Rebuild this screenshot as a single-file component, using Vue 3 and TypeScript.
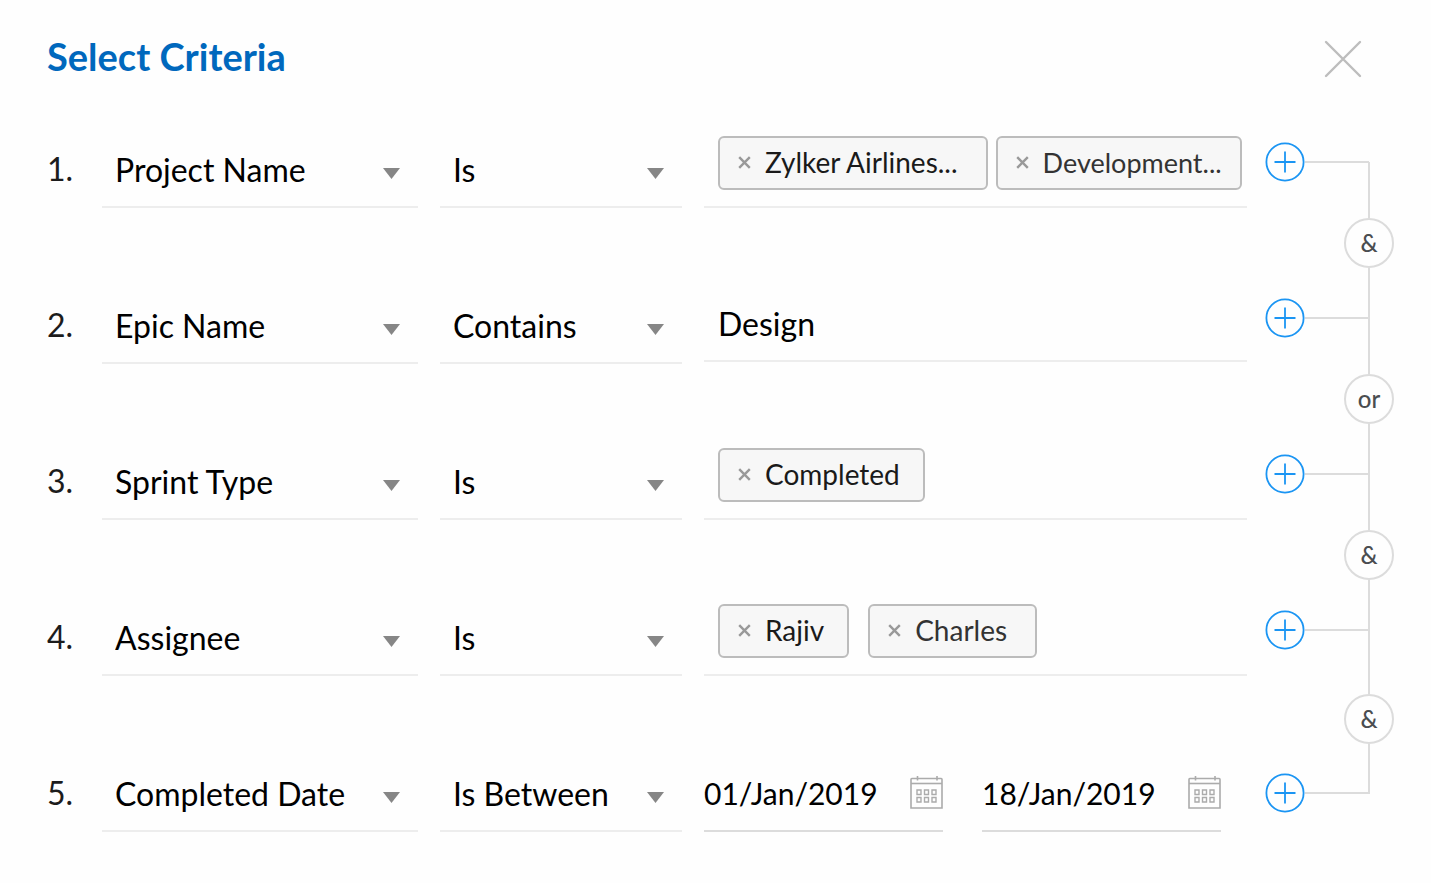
<script setup lang="ts">
import { ref } from 'vue'

interface Tag {
  label: string
  look?: 'roomy' | 'snug'
  muted?: boolean
}

interface Criterion {
  id: number
  field: string
  operator: string
  kind: 'tags' | 'text' | 'dates'
  tags?: Tag[]
  text?: string
  dates?: string[]
}

const fields = ['Project Name', 'Epic Name', 'Sprint Type', 'Assignee', 'Completed Date']
const operators = ['Is', 'Contains', 'Is Between']

const criteria = ref<Criterion[]>([
  {
    id: 1,
    field: 'Project Name',
    operator: 'Is',
    kind: 'tags',
    tags: [
      { label: 'Zylker Airlines...', look: 'roomy' },
      { label: 'Development...', look: 'snug', muted: true },
    ],
  },
  { id: 2, field: 'Epic Name', operator: 'Contains', kind: 'text', text: 'Design' },
  { id: 3, field: 'Sprint Type', operator: 'Is', kind: 'tags', tags: [{ label: 'Completed' }] },
  {
    id: 4,
    field: 'Assignee',
    operator: 'Is',
    kind: 'tags',
    tags: [{ label: 'Rajiv' }, { label: 'Charles', look: 'roomy', muted: true }],
  },
  {
    id: 5,
    field: 'Completed Date',
    operator: 'Is Between',
    kind: 'dates',
    dates: ['01/Jan/2019', '18/Jan/2019'],
  },
])

const joins = ref<string[]>(['&', 'or', '&', '&'])

function removeTag(row: Criterion, index: number) {
  row.tags?.splice(index, 1)
}

function toggleJoin(index: number) {
  joins.value[index] = joins.value[index] === '&' ? 'or' : '&'
}
</script>

<template>
  <main class="dialog">
    <header class="head">
      <h1>Select Criteria</h1>
      <button class="close" type="button" aria-label="Close">
        <svg viewBox="0 0 38 38" width="38" height="38">
          <path d="M2 2L36 36M36 2L2 36" fill="none" stroke="#bdbdbd" stroke-width="2.4" stroke-linecap="round" />
        </svg>
      </button>
    </header>

    <div class="body">
      <ol class="rows">
        <li v-for="row in criteria" :key="row.id" class="row" :class="'row-' + row.kind">
          <span class="num">{{ row.id }}.</span>

          <div class="pick">
            <select v-model="row.field" :aria-label="'Field ' + row.id">
              <option v-for="f in fields" :key="f">{{ f }}</option>
            </select>
            <svg class="arrow" viewBox="0 0 17 11" width="17" height="11"><path d="M0 0H17L8.5 11Z" fill="#868686" /></svg>
          </div>

          <div class="pick">
            <select v-model="row.operator" :aria-label="'Operator ' + row.id">
              <option v-for="o in operators" :key="o">{{ o }}</option>
            </select>
            <svg class="arrow" viewBox="0 0 17 11" width="17" height="11"><path d="M0 0H17L8.5 11Z" fill="#868686" /></svg>
          </div>

          <div v-if="row.kind === 'tags'" class="tags" :class="{ spread: row.id === 4 }">
            <span v-for="(tag, i) in row.tags" :key="tag.label" class="tag" :class="[tag.look, { muted: tag.muted }]">
              <button type="button" :aria-label="'Remove ' + tag.label" @click="removeTag(row, i)">
                <svg viewBox="0 0 13 13" width="13" height="13">
                  <path d="M1.2 1.2L11.8 11.8M11.8 1.2L1.2 11.8" fill="none" stroke="#999" stroke-width="2.4" />
                </svg>
              </button>
              {{ tag.label }}
            </span>
          </div>

          <input v-else-if="row.kind === 'text'" v-model="row.text" class="text" type="text" :aria-label="'Value ' + row.id" />

          <div v-else class="dates">
            <div v-for="(date, i) in row.dates" :key="i" class="date">
              <input v-model="row.dates![i]" type="text" :aria-label="i === 0 ? 'From date' : 'To date'" />
              <button type="button" aria-label="Open calendar">
                <svg viewBox="0 0 33 33" width="33" height="33" fill="none" stroke="#ababab">
                  <path d="M1.8 2.5H31.2Q32 2.5 32 3.5V32H1V3.5Q1 2.5 1.8 2.5Z" stroke-width="1.6" />
                  <path d="M1 7.5H32" stroke-width="1.6" />
                  <path d="M7.5 0V4.5M27 0V4.5" stroke-width="1.6" />
                  <path
                    d="M7 14H11V18.500H7ZM14.500 14H18.500V18.500H14.500ZM22 14H26V18.500H22ZM7 21.500H11V26H7ZM14.500 21.500H18.500V26H14.500ZM22 21.500H26V26H22Z"
                    stroke-width="1.4"
                  />
                </svg>
              </button>
            </div>
          </div>

          <div class="branch">
            <button class="add" type="button" :aria-label="'Add criterion after ' + row.id">
              <svg viewBox="0 0 40 40" width="40" height="40" fill="none" stroke="#1b95f3" stroke-width="1.8">
                <circle cx="20" cy="20" r="18.600" />
                <path d="M20 9.500V30.500M9.500 20H30.500" />
              </svg>
            </button>
            <span class="stub"></span>
          </div>
        </li>
      </ol>

      <div class="rail">
        <div v-for="(join, i) in joins" :key="i" class="link">
          <span class="line"></span>
          <button type="button" @click="toggleJoin(i)">{{ join }}</button>
          <span class="line tail"></span>
        </div>
      </div>
    </div>
  </main>
</template>

<style>
body {
  margin: 0;
  background: #fefefe;
}
</style>

<style scoped>
.dialog {
  padding: 30px 37px 52px 47px;
  font-family: Lato, 'Open Sans', sans-serif;
  font-size: 32px;
  color: #000;
}

button,
input,
select {
  margin: 0;
  padding: 0;
  border: 0;
  border-radius: 0;
  background: none;
  font: inherit;
  color: inherit;
  box-sizing: border-box;
}

button {
  cursor: pointer;
}

svg {
  display: block;
}

.head {
  display: flex;
  justify-content: space-between;
  align-items: flex-start;
  height: 98px;
  padding-right: 32px;
}

h1 {
  margin: 0;
  font-size: 38px;
  line-height: 52px;
  font-weight: 700;
  color: #0068bd;
}

.close {
  margin-top: 10px;
}

.body {
  display: flex;
}

.rows {
  flex: 1;
  min-width: 0;
  margin: 0;
  padding: 0;
  list-style: none;
  display: flex;
  flex-direction: column;
  gap: 76px;
}

.row {
  display: grid;
  grid-template-columns: 33px minmax(0, 316fr) minmax(0, 242fr) minmax(0, 543fr) 75px;
  column-gap: 22px;
  align-items: start;
  height: 80px;
}

.num {
  line-height: 82px;
  color: #1c1c1c;
}

.pick {
  position: relative;
}

.pick select {
  display: block;
  width: 100%;
  height: 80px;
  padding: 4px 40px 0 13px;
  border-bottom: 2px solid #ededed;
  appearance: none;
}

.arrow {
  position: absolute;
  right: 18px;
  top: 40px;
  pointer-events: none;
}

.tags {
  display: flex;
  align-items: flex-start;
  gap: 8px;
  height: 80px;
  padding: 8px 0 0 14px;
  box-sizing: border-box;
  border-bottom: 2px solid #ededed;
}

.tags.spread {
  gap: 19px;
}

.tag {
  display: flex;
  align-items: center;
  gap: 14px;
  height: 54px;
  padding: 0 23px 2px 18px;
  box-sizing: border-box;
  border: 2px solid #bcbcbc;
  border-radius: 6px;
  background: #f7f7f7;
  font-size: 28px;
  color: #1a1a1a;
  white-space: nowrap;
}

.tag.muted {
  color: #333;
}

.tag.roomy {
  padding-right: 28px;
}

.tag.snug {
  padding-right: 18px;
  font-size: 27px;
}

.text {
  width: 100%;
  height: 78px;
  padding: 2px 14px 0;
  border-bottom: 2px solid #ededed;
}

.dates {
  display: grid;
  grid-template-columns: minmax(0, 1fr) minmax(0, 1fr);
  gap: 39px;
  padding-right: 26px;
}

.date {
  display: flex;
  align-items: center;
  height: 80px;
  box-sizing: border-box;
  border-bottom: 2px solid #dcdcdc;
}

.date input {
  flex: 1;
  min-width: 0;
  height: 78px;
  padding-top: 4px;
  font-size: 30px;
}

.date button {
  padding-top: 2px;
}

.branch {
  display: flex;
  align-items: center;
  margin: 14px -25px 0 -4px;
}

.row-dates .branch {
  margin-top: 21px;
}

.add {
  flex: none;
}

.stub {
  flex: 1;
  height: 2px;
  background: #dcdcdc;
}

.rail {
  width: 50px;
  display: flex;
  flex-direction: column;
  padding: 34px 0 38px;
}

.link {
  height: 156px;
  display: flex;
  flex-direction: column;
  align-items: center;
}

.link:last-child {
  flex: 1;
}

.line {
  flex: 1;
  width: 2px;
  background: #dcdcdc;
}

.tail {
  flex: none;
  height: 50px;
}

.link button {
  flex: none;
  width: 50px;
  height: 50px;
  border: 2px solid #dcdcdc;
  border-radius: 50%;
  font-size: 24px;
  font-weight: 500;
  line-height: 44px;
  color: #4a4d50;
}
</style>
